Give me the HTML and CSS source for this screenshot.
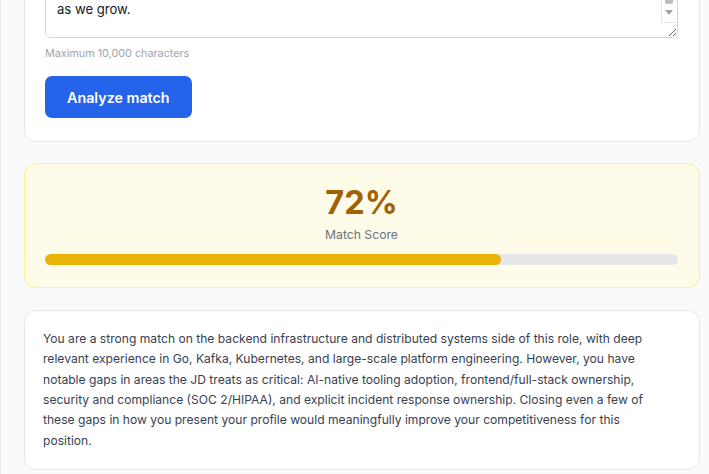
FILE: index.html
```html
<!DOCTYPE html>
<html lang="en">
<head>
<meta charset="utf-8">
<title>Resume Match</title>
<link rel="stylesheet" href="styles.css">
</head>
<body>
<main class="panel">
  <section class="card card-input">
    <label class="field-label" for="jd">Job description</label>
    <div class="jd-wrap">
      <textarea id="jd" class="jd-input">About the role
We're looking for a Senior Backend Engineer to join our platform team.
You'll design and operate distributed systems built with Go, Kafka and
Kubernetes, and own services end to end.

What you'll do
- Build and scale our event streaming platform
- Own security and compliance work (SOC 2/HIPAA)
- Lead incident response and on-call improvements
- Help us adopt AI-native tooling across the stack
- Contribute to frontend / full-stack features when needed
You'll mentor engineers and help shape our architecture and culture
as we grow.</textarea>
      <div class="fake-scroll" aria-hidden="true">
        <span class="fake-thumb"></span>
        <span class="fake-down"></span>
        <span class="fake-corner"></span>
      </div>
    </div>
    <p class="hint">Maximum 10,000 characters</p>
    <button class="btn-primary" type="button">Analyze match</button>
  </section>

  <section class="card score-card">
    <div class="score-value">72%</div>
    <div class="score-label">Match Score</div>
    <div class="bar"><div class="bar-fill" style="width:72%"></div></div>
  </section>

  <section class="card summary-card">
    <p class="summary">You are a strong match on the backend infrastructure and distributed systems side of this role, with deep relevant experience in Go, Kafka, Kubernetes, and large-scale platform engineering. However, you have notable gaps in areas the JD treats as critical: AI-native tooling adoption, frontend/full-stack ownership, security and compliance (SOC 2/HIPAA), and explicit incident response ownership. Closing even a few of these gaps in how you present your profile would meaningfully improve your competitiveness for this position.</p>
  </section>
</main>
<script src="script.js"></script>
</body>
</html>
```

FILE: styles.css
```css
html, body {
  margin: 0;
  padding: 0;
  height: 100%;
  overflow: hidden;
  background: #f9fafb;
}

body {
  font-family: Inter, "Noto Sans", "Liberation Sans", sans-serif;
  color: #111827;
}

.panel {
  min-height: 100%;
  box-sizing: border-box;
  border-left: 1px solid #e5e7eb;
  padding: 0 9px 0 23px;
  display: flex;
  flex-direction: column;
  gap: 21px;
}

.card {
  background: #ffffff;
  border: 1px solid #e5e7eb;
  border-radius: 12px;
}

.card-input {
  margin-top: -201px;
  padding: 20px 21px 23px 20px;
  display: flex;
  flex-direction: column;
  align-items: flex-start;
}

.field-label {
  font-size: 14px;
  line-height: 20px;
  font-weight: 500;
  color: #374151;
  margin-bottom: 8px;
}

.jd-wrap {
  position: relative;
  width: 100%;
  display: flex;
}

.jd-input {
  box-sizing: border-box;
  width: 100%;
  height: 190px;
  margin: 0;
  padding: 10px 26px 18px 11px;
  border: 1px solid #d1d5db;
  border-radius: 6px;
  font-family: Inter, "Noto Sans", "Liberation Sans", sans-serif;
  font-size: 13.1px;
  line-height: 20px;
  color: #111827;
  background: #ffffff;
  overflow-y: scroll;
  resize: vertical;
}

.fake-scroll {
  position: absolute;
  top: 1px;
  right: 1px;
  bottom: 16px;
  width: 15px;
  border-left: 1px solid #e3e3e3;
  pointer-events: none;
}

.fake-thumb {
  position: absolute;
  left: 3px;
  right: 4px;
  bottom: 18px;
  height: 60px;
  border-radius: 2px;
  background: #bdbdbd;
}

.fake-down {
  position: absolute;
  left: 3px;
  bottom: 7px;
  width: 0;
  height: 0;
  border-left: 4px solid transparent;
  border-right: 4px solid transparent;
  border-top: 5px solid #a3a3a3;
}

.fake-corner {
  position: absolute;
  left: -1px;
  right: 0;
  bottom: -1px;
  height: 0;
  border-bottom: 1px solid #e3e3e3;
}

.hint {
  margin: 8px 0 0;
  font-size: 10.8px;
  line-height: 16px;
  color: #9ca3af;
}

.btn-primary {
  margin-top: 14px;
  height: 42px;
  padding: 0 22px;
  border: 0;
  border-radius: 7px;
  background: #2563eb;
  color: #ffffff;
  font-family: Inter, "Noto Sans", "Liberation Sans", sans-serif;
  font-size: 14.3px;
  font-weight: 600;
  cursor: pointer;
}

.score-card {
  background: #fefce8;
  border-color: #fef08a;
  padding: 20px 21px 22px 20px;
  display: flex;
  flex-direction: column;
  align-items: center;
}

.score-value {
  font-size: 32.5px;
  line-height: 38px;
  font-weight: 700;
  color: #a16207;
}

.score-label {
  margin-top: 3px;
  font-size: 12.2px;
  line-height: 20px;
  color: #6b7280;
}

.bar {
  align-self: stretch;
  margin-top: 9px;
  height: 11px;
  border-radius: 6px;
  background: #e5e7eb;
  overflow: hidden;
}

.bar-fill {
  height: 100%;
  border-radius: 6px;
  background: #eab308;
}

.summary-card {
  margin-top: 1px;
  padding: 18px 27.6px 18px 18px;
}

.summary {
  margin: 0;
  font-size: 12.1px;
  line-height: 20.33px;
  color: #374151;
}
```

FILE: script.js
```js
var jd = document.getElementById('jd');
jd.scrollTop = jd.scrollHeight;
```
